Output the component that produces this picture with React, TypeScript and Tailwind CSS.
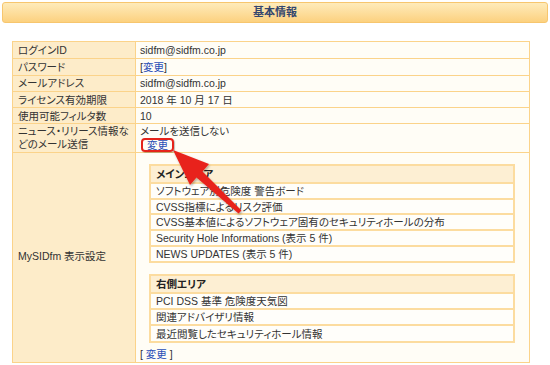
import React from 'react';

const rows: { label: React.ReactNode; value: React.ReactNode }[] = [
  { label: 'ログインID', value: 'sidfm@sidfm.co.jp' },
  {
    label: 'パスワード',
    value: (
      <span>
        [<a className="text-[#2b4fb6]">変更</a>]
      </span>
    ),
  },
  { label: 'メールアドレス', value: 'sidfm@sidfm.co.jp' },
  { label: 'ライセンス有効期限', value: '2018 年 10 月 17 日' },
  { label: '使用可能フィルタ数', value: '10' },
];

const mainArea = [
  'ソフトウェア別危険度 警告ボード',
  'CVSS指標によるリスク評価',
  'CVSS基本値によるソフトウェア固有のセキュリティホールの分布',
  'Security Hole Informations (表示 5 件)',
  'NEWS UPDATES (表示 5 件)',
];

const rightArea = ['PCI DSS 基準 危険度天気図', '関連アドバイザリ情報', '最近閲覧したセキュリティホール情報'];

const AreaTable: React.FC<{ title: string; items: string[]; rowClass: string }> = ({ title, items, rowClass }) => (
  <div className="ml-[13px] mr-[14px] border-2 border-[#fcdc9f]">
    <div className={`${rowClass} flex items-center bg-[#fdefd3] font-bold text-[#222]`}>{title}</div>
    {items.map((item) => (
      <div key={item} className={`${rowClass} flex items-center border-t-2 border-[#fcdc9f] bg-[#fffefa]`}>
        {item}
      </div>
    ))}
  </div>
);

const Arrow: React.FC = () => (
  <svg className="absolute left-0 top-0 pointer-events-none" width="550" height="365" viewBox="0 0 550 365">
    <defs>
      <filter id="arrowShadow" x="-20%" y="-20%" width="140%" height="140%">
        <feDropShadow dx="1" dy="1.5" stdDeviation="1" floodColor="#000" floodOpacity="0.3" />
      </filter>
    </defs>
    <polygon
      points="173,150 209,164 202.5,171.5 241.5,210.5 238.5,213.5 196.5,177.5 190,185"
      fill="#e8241b"
      filter="url(#arrowShadow)"
    />
  </svg>
);

export default function App() {
  return (
    <div
      className="relative w-[550px] h-[365px] bg-white text-[10.5px] text-[#333] overflow-hidden [font-feature-settings:'palt']"
      style={{ fontFamily: '"Liberation Sans", "Noto Sans CJK JP", sans-serif' }}
    >
      {/* title bar */}
      <div className="mx-[2px] mt-[2px] h-[21px] rounded-[3px] border border-[#f7c66e] bg-gradient-to-b from-[#feebba] to-[#fcd17f] flex items-center justify-center">
        <span className="text-[11px] font-bold text-[#34466e]">基本情報</span>
      </div>

      <div className="ml-[12px] mt-[18px] w-[518px] border border-[#fbd38a]">
        {rows.map((row, i) => (
          <div key={i} className={`flex h-[16.3px] ${i > 0 ? 'border-t border-[#fbd38a]' : ''}`}>
            <div className="w-[123px] shrink-0 flex items-center border-r border-[#fbd38a] bg-[#fdecc9] pl-[5px] leading-[12px]">
              {row.label}
            </div>
            <div className="flex-1 flex items-center bg-[#fffdf6] pl-[4px] leading-[12px]">{row.value}</div>
          </div>
        ))}

        <div className="flex h-[28.4px] border-t border-[#fbd38a]">
          <div className="w-[123px] shrink-0 border-r border-[#fbd38a] bg-[#fdecc9] pl-[5px] pt-[0.5px] leading-[13.5px] whitespace-nowrap">
            ニュース・リリース情報な
            <br />
            どのメール送信
          </div>
          <div className="flex-1 bg-[#fffdf6] pl-[4px] pt-[0.5px] leading-[13.5px]">
            <div>メールを送信しない</div>
            <div className="h-[14px]">
              <span className="inline-block ml-[1px] h-[14px] rounded-[4px] border-2 border-[#e5231a] px-[4px] leading-[10px] text-[#2b4fb6] shadow-[1px_1px_1px_rgba(0,0,0,0.25)]">
                変更
              </span>
            </div>
          </div>
        </div>

        <div className="flex border-t border-[#fbd38a]">
          <div className="w-[123px] shrink-0 border-r border-[#fbd38a] bg-[#fdecc9] pl-[5px] flex items-center">
            MySIDfm 表示設定
          </div>
          <div className="flex-1 bg-[#fffdf6] pt-[11.5px] pb-[2px]">
            <AreaTable title="メインエリア" items={mainArea} rowClass="h-[15.7px] pl-[5px] leading-[12px]" />
            <div className="h-[11px]" />
            <AreaTable title="右側エリア" items={rightArea} rowClass="h-[16.3px] pl-[5px] leading-[12px]" />
            <div className="mt-[5px] pl-[4px] leading-[12px]">
              [ <a className="text-[#2b4fb6]">変更</a> ]
            </div>
          </div>
        </div>
      </div>

      <Arrow />
    </div>
  );
}
